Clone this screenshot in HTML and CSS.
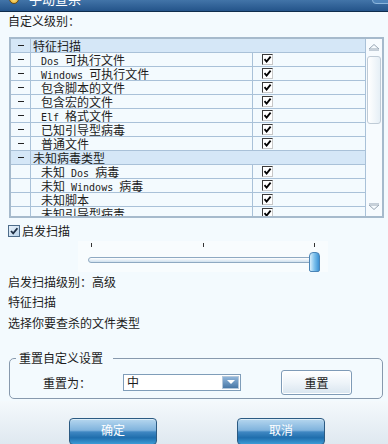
FILE: index.html
```html
<!DOCTYPE html>
<html lang="zh-CN">
<head>
    <meta charset="UTF-8">
    <title>手动查杀</title>
    <link rel="stylesheet" href="styles.css">
</head>
<body>
    <div class="titlebar">
        <div class="title-inner">
            <span class="app-icon"></span>
            <span class="title">手动查杀</span>
            <span class="close-btn"></span>
        </div>
    </div>

    <div class="label-top">自定义级别：</div>

    <div class="list-frame">
        <div class="list">
            <div class="row group"><span class="c1"><i class="dash"></i></span><span class="c2">特征扫描</span></div>
            <div class="row"><span class="c1"><i class="dash"></i></span><span class="c2"><span class="mono">Dos </span>可执行文件</span><span class="c3"><i class="chk"><svg viewBox="0 0 9 9" width="9" height="9"><path d="M1.5 4.2 L3.6 6.6 L7.6 1.6" fill="none" stroke="#000" stroke-width="1.8"/></svg></i></span></div>
            <div class="row"><span class="c1"><i class="dash"></i></span><span class="c2"><span class="mono">Windows </span>可执行文件</span><span class="c3"><i class="chk"><svg viewBox="0 0 9 9" width="9" height="9"><path d="M1.5 4.2 L3.6 6.6 L7.6 1.6" fill="none" stroke="#000" stroke-width="1.8"/></svg></i></span></div>
            <div class="row"><span class="c1"><i class="dash"></i></span><span class="c2">包含脚本的文件</span><span class="c3"><i class="chk"><svg viewBox="0 0 9 9" width="9" height="9"><path d="M1.5 4.2 L3.6 6.6 L7.6 1.6" fill="none" stroke="#000" stroke-width="1.8"/></svg></i></span></div>
            <div class="row"><span class="c1"><i class="dash"></i></span><span class="c2">包含宏的文件</span><span class="c3"><i class="chk"><svg viewBox="0 0 9 9" width="9" height="9"><path d="M1.5 4.2 L3.6 6.6 L7.6 1.6" fill="none" stroke="#000" stroke-width="1.8"/></svg></i></span></div>
            <div class="row"><span class="c1"><i class="dash"></i></span><span class="c2"><span class="mono">Elf </span>格式文件</span><span class="c3"><i class="chk"><svg viewBox="0 0 9 9" width="9" height="9"><path d="M1.5 4.2 L3.6 6.6 L7.6 1.6" fill="none" stroke="#000" stroke-width="1.8"/></svg></i></span></div>
            <div class="row"><span class="c1"><i class="dash"></i></span><span class="c2">已知引导型病毒</span><span class="c3"><i class="chk"><svg viewBox="0 0 9 9" width="9" height="9"><path d="M1.5 4.2 L3.6 6.6 L7.6 1.6" fill="none" stroke="#000" stroke-width="1.8"/></svg></i></span></div>
            <div class="row"><span class="c1"><i class="dash"></i></span><span class="c2">普通文件</span><span class="c3"><i class="chk"><svg viewBox="0 0 9 9" width="9" height="9"><path d="M1.5 4.2 L3.6 6.6 L7.6 1.6" fill="none" stroke="#000" stroke-width="1.8"/></svg></i></span></div>
            <div class="row group"><span class="c1"><i class="dash"></i></span><span class="c2">未知病毒类型</span></div>
            <div class="row"><span class="c1"></span><span class="c2">未知<span class="mono"> Dos </span>病毒</span><span class="c3"><i class="chk"><svg viewBox="0 0 9 9" width="9" height="9"><path d="M1.5 4.2 L3.6 6.6 L7.6 1.6" fill="none" stroke="#000" stroke-width="1.8"/></svg></i></span></div>
            <div class="row"><span class="c1"></span><span class="c2">未知<span class="mono"> Windows </span>病毒</span><span class="c3"><i class="chk"><svg viewBox="0 0 9 9" width="9" height="9"><path d="M1.5 4.2 L3.6 6.6 L7.6 1.6" fill="none" stroke="#000" stroke-width="1.8"/></svg></i></span></div>
            <div class="row"><span class="c1"></span><span class="c2">未知脚本</span><span class="c3"><i class="chk"><svg viewBox="0 0 9 9" width="9" height="9"><path d="M1.5 4.2 L3.6 6.6 L7.6 1.6" fill="none" stroke="#000" stroke-width="1.8"/></svg></i></span></div>
            <div class="row"><span class="c1"></span><span class="c2">未知引导型病毒</span><span class="c3"><i class="chk"><svg viewBox="0 0 9 9" width="9" height="9"><path d="M1.5 4.2 L3.6 6.6 L7.6 1.6" fill="none" stroke="#000" stroke-width="1.8"/></svg></i></span></div>
        </div>
        <div class="scrollbar">
            <span class="sb-btn"><svg viewBox="0 0 12 8" width="12" height="8"><path d="M1 6 L6 1.5 L11 6 Z" fill="none" stroke="#98a6b4"/><path d="M1 7.5 H11" stroke="#c4ced8"/></svg></span>
            <span class="sb-thumb"></span>
            <span class="sb-space"></span>
            <span class="sb-btn"><svg viewBox="0 0 12 8" width="12" height="8"><path d="M1 2 L6 6.5 L11 2 Z" fill="none" stroke="#98a6b4"/><path d="M1 0.5 H11" stroke="#c4ced8"/></svg></span>
        </div>
    </div>

    <div class="heur">
        <i class="heur-chk"><svg viewBox="0 0 10 10" width="10" height="10"><path d="M2 5 L4.2 7.4 L8.4 2.2" fill="none" stroke="#1d2f45" stroke-width="1.8"/></svg></i>
        <span>启发扫描</span>
    </div>

    <div class="slider">
        <div class="ticks"><i class="tick"></i><i class="tick"></i><i class="tick"></i></div>
        <div class="track">
            <span class="thumb"></span>
        </div>
    </div>

    <div class="info info-1">启发扫描级别：高级</div>
    <div class="info info-2">特征扫描</div>
    <div class="info info-3">选择你要查杀的文件类型</div>

    <fieldset class="reset-group">
        <legend>重置自定义设置</legend>
        <div class="reset-row">
            <span class="reset-label">重置为：</span>
            <div class="combo">
                <span class="combo-text">中</span>
                <span class="combo-arrow"><svg viewBox="0 0 10 6" width="10" height="6"><path d="M1 1 H9 L5 5 Z" fill="#fff"/></svg></span>
            </div>
            <button class="btn-light">重置</button>
        </div>
    </fieldset>

    <div class="footer">
        <button class="btn-blue">确定</button>
        <button class="btn-blue">取消</button>
    </div>
</body>
</html>
```

FILE: styles.css
```css
* {
    box-sizing: border-box;
}

body {
    margin: 0;
    width: 388px;
    height: 444px;
    overflow: hidden;
    background: #f3fafe;
    font-family: "Noto Sans CJK SC", sans-serif;
    font-size: 12px;
    color: #1c1c1c;
}

.mono {
    font-family: "DejaVu Sans Mono", monospace;
    font-size: 10px;
    white-space: pre;
}

/* title bar, only the lower part shows */
.titlebar {
    height: 12px;
    overflow: hidden;
    background: linear-gradient(#4274a8, #24548a);
    border-bottom: 1px solid #0e2c4c;
}

.title-inner {
    display: flex;
    align-items: center;
    height: 20px;
    margin-top: -11px;
    padding-left: 9px;
}

.app-icon {
    width: 10px;
    height: 10px;
    border-radius: 50%;
    background: radial-gradient(circle at 50% 60%, #ffe07a, #d89a18);
    border: 1px solid #6b4a10;
}

.title {
    margin-left: 10px;
    color: #fff;
    font-size: 13px;
    line-height: 20px;
}

.close-btn {
    margin-left: auto;
    margin-right: -4px;
    align-self: flex-start;
    width: 20px;
    height: 15px;
    border-radius: 4px;
    background: #4f84ba;
    border: 1px solid #8cb6dc;
}

.label-top {
    height: 25px;
    line-height: 17px;
    padding-left: 8px;
}

/* list */
.list-frame {
    margin-left: 9px;
    width: 375px;
    height: 181px;
    border: 2px solid #a6bacc;
    display: flex;
}

.list {
    flex: 1;
    overflow: hidden;
    border-right: 1px solid #a9c1d8;
}

.row {
    display: grid;
    grid-template-columns: 20px 222px 1fr;
    height: 14px;
    border-bottom: 1px solid #a9c1d8;
    line-height: 13px;
}

.row.group {
    grid-template-columns: 20px 1fr;
    background: #d5e7f7;
}

.c1, .c2 {
    border-right: 1px solid #a9c1d8;
}

.row.group .c2 {
    border-right: none;
    padding-left: 2px;
}

.c1 {
    display: flex;
    align-items: center;
    justify-content: center;
}

.c2 {
    padding-left: 10px;
    white-space: nowrap;
    overflow: hidden;
}

.c3 {
    padding-left: 9px;
    display: flex;
    align-items: center;
}

.dash {
    width: 6px;
    height: 1px;
    background: #222;
    margin-left: 1px;
}

.chk {
    width: 11px;
    height: 11px;
    background: #fff;
    border-top: 1px solid #3a3a3a;
    border-left: 1px solid #3a3a3a;
    border-right: 1px solid #c8c8c8;
    border-bottom: 1px solid #c8c8c8;
    display: flex;
    align-items: center;
    justify-content: center;
}

.scrollbar {
    width: 16px;
    display: flex;
    flex-direction: column;
    align-items: center;
    padding: 1px 0 2px;
    background: #f7fbfe;
}

.sb-btn {
    width: 14px;
    height: 14px;
    display: flex;
    align-items: center;
    justify-content: center;
}

.sb-thumb {
    width: 14px;
    height: 68px;
    margin-top: 2px;
    border: 1px solid #bfcbd6;
    border-radius: 3px;
    background: linear-gradient(90deg, #ffffff, #e6eff6);
}

.sb-space {
    flex: 1;
}

/* heuristic */
.heur {
    display: flex;
    align-items: center;
    gap: 2px;
    margin: 6px 0 0 8px;
    height: 14px;
    line-height: 14px;
}

.heur-chk {
    width: 12px;
    height: 12px;
    border: 1px solid #4d6c8a;
    background: linear-gradient(135deg, #e9f3fb, #b9d3ea);
    display: flex;
    align-items: center;
    justify-content: center;
}

.slider {
    margin: 3px 0 0 78px;
    width: 250px;
    height: 31px;
    padding-top: 2px;
    background: #f8fcfe;
}

.ticks {
    display: flex;
    justify-content: space-between;
    padding: 0 13px;
    height: 4px;
}

.tick {
    width: 1px;
    height: 4px;
    background: #333;
}

.track {
    position: relative;
    margin: 10px 0 0 10px;
    width: 230px;
    height: 6px;
    border: 1px solid #8ea9c2;
    border-radius: 3px;
    background: linear-gradient(#ffffff, #cfe0ee);
}

.thumb {
    position: absolute;
    left: 220px;
    top: -6px;
    width: 11px;
    height: 20px;
    border: 1px solid #4a84b6;
    border-radius: 4px 4px 2px 2px;
    background: linear-gradient(90deg, #d8eefb, #7cc0ec 50%, #3d92d4);
}

.info {
    padding-left: 8px;
    line-height: 16px;
}

.info-1 {
    margin-top: 2px;
}

.info-2 {
    margin-top: 4px;
}

.info-3 {
    margin-top: 5px;
}

/* reset group */
.reset-group {
    margin: 19px 0 0 9px;
    width: 374px;
    height: 49px;
    padding: 0;
    border: 1px solid #8799ad;
    border-radius: 5px;
}

.reset-group legend {
    margin-left: 6px;
    padding: 0 10px 0 3px;
    line-height: 16px;
}

.reset-row {
    display: flex;
    align-items: center;
    height: 26px;
    margin-top: 3px;
    padding-left: 33px;
}

.reset-label {
    width: 48px;
}

.combo {
    margin-left: 32px;
    width: 118px;
    height: 17px;
    border: 1px solid #7f9db9;
    background: #fff;
    display: flex;
    align-items: center;
    padding: 1px;
}

.combo-text {
    flex: 1;
    padding-left: 2px;
    line-height: 14px;
}

.combo-arrow {
    width: 17px;
    height: 13px;
    border: 1px solid #b6c8da;
    background: linear-gradient(#8fb5da, #4a78a6);
    display: flex;
    align-items: center;
    justify-content: center;
}

.btn-light {
    margin-left: 40px;
    width: 71px;
    height: 25px;
    padding: 0;
    border: 1px solid #7f9bb7;
    border-radius: 3px;
    background: linear-gradient(#ffffff, #eef4f9 50%, #d9e5ef);
    box-shadow: inset 0 0 0 1px #ffffff;
    font-family: inherit;
    font-size: 12px;
    color: #1c1c1c;
}

/* footer */
.footer {
    margin-top: 2px;
    height: 43px;
    display: flex;
    gap: 80px;
    padding: 17px 0 0 69px;
    background: linear-gradient(#f4f9fc, #dfe8f0);
}

.btn-blue {
    width: 88px;
    height: 27px;
    padding: 0 0 3px;
    border: 1px solid #2b5a82;
    border-radius: 4px;
    background: linear-gradient(#b6d7ef 0%, #7fb3dd 45%, #3f87c2 52%, #1f6ead 75%, #3b9bd6 100%);
    box-shadow: inset 0 1px 0 #d9ecf8;
    color: #fff;
    font-family: inherit;
    font-size: 12px;
    line-height: 20px;
}
```
